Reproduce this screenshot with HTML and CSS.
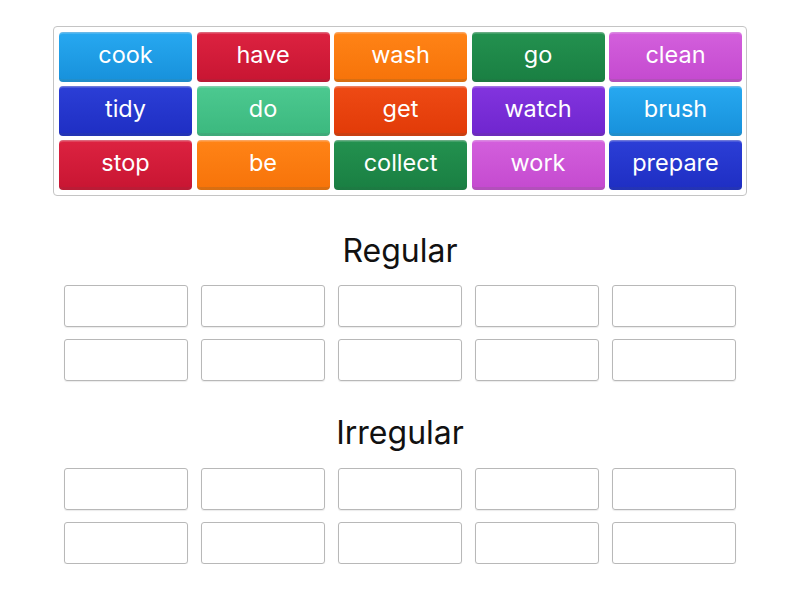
FILE: index.html
```html
<!DOCTYPE html>
<html>
<head>
<meta charset="utf-8">
<link rel="stylesheet" href="styles.css">
</head>
<body>
<div class="page">
  <div class="bank">
    <div class="tile blue">cook</div>
    <div class="tile red">have</div>
    <div class="tile orange">wash</div>
    <div class="tile green">go</div>
    <div class="tile pink">clean</div>
    <div class="tile navy">tidy</div>
    <div class="tile mint">do</div>
    <div class="tile vermil">get</div>
    <div class="tile purple">watch</div>
    <div class="tile blue">brush</div>
    <div class="tile red">stop</div>
    <div class="tile orange">be</div>
    <div class="tile green">collect</div>
    <div class="tile pink">work</div>
    <div class="tile navy">prepare</div>
  </div>
  <h2 class="title title-first">Regular</h2>
  <div class="slots">
    <div class="slot"></div><div class="slot"></div><div class="slot"></div><div class="slot"></div><div class="slot"></div>
    <div class="slot"></div><div class="slot"></div><div class="slot"></div><div class="slot"></div><div class="slot"></div>
  </div>
  <h2 class="title">Irregular</h2>
  <div class="slots slots-last">
    <div class="slot"></div><div class="slot"></div><div class="slot"></div><div class="slot"></div><div class="slot"></div>
    <div class="slot"></div><div class="slot"></div><div class="slot"></div><div class="slot"></div><div class="slot"></div>
  </div>
</div>
</body>
</html>
```
FILE: styles.css
```css
* { box-sizing: border-box; }
html, body { margin: 0; padding: 0; background: #fff; }
body { font-family: "Inter", "Lato", sans-serif; }
.page {
  width: 694px;
  margin: 26px 0 0 53px;
  display: flex;
  flex-direction: column;
  align-items: center;
}
.bank {
  width: 694px;
  height: 170px;
  border: 1px solid #c4c4c4;
  border-radius: 4px;
  padding: 5px 4px 4px 5px;
  display: grid;
  grid-template-columns: repeat(5, 133px);
  grid-template-rows: repeat(3, 50px);
  column-gap: 4.5px;
  row-gap: 4px;
}
.tile {
  border-radius: 4px;
  color: #fff;
  font-size: 23.5px;
  font-weight: 400;
  line-height: 44px;
  text-align: center;
  border-top: 1px solid rgba(255,255,255,0.35);
  border-bottom: 3px solid rgba(0,0,0,0.15);
  box-shadow: inset 0 1px 0 rgba(255,255,255,0.15);
}
.blue { background: linear-gradient(#27a8f0, #1892dc); }
.red { background: linear-gradient(#dc2240, #c91633); }
.orange { background: linear-gradient(#ff8316, #f7740a); }
.green { background: linear-gradient(#23914f, #1a8043); }
.pink { background: linear-gradient(#d35fdc, #c54bd0); }
.navy { background: linear-gradient(#2b3ed6, #1f2fc4); }
.mint { background: linear-gradient(#4cc990, #3cb97f); }
.vermil { background: linear-gradient(#ee4a14, #e23b08); }
.purple { background: linear-gradient(#8234de, #7026cf); }
.title {
  margin: 31px 0 0 0;
  font-weight: 400;
  font-size: 32px;
  line-height: 42px;
  color: #111;
}
.title-first { margin-top: 34px; }
.slots {
  margin-top: 13px;
  width: 672px;
  display: grid;
  grid-template-columns: repeat(5, 124px);
  grid-template-rows: repeat(2, 42px);
  column-gap: 13px;
  row-gap: 12px;
}
.slots-last { margin-top: 14px; }
.slot {
  border: 1px solid #b8b8b8;
  border-radius: 3px;
  box-shadow: 0 1px 1px rgba(0,0,0,0.08);
}
```
